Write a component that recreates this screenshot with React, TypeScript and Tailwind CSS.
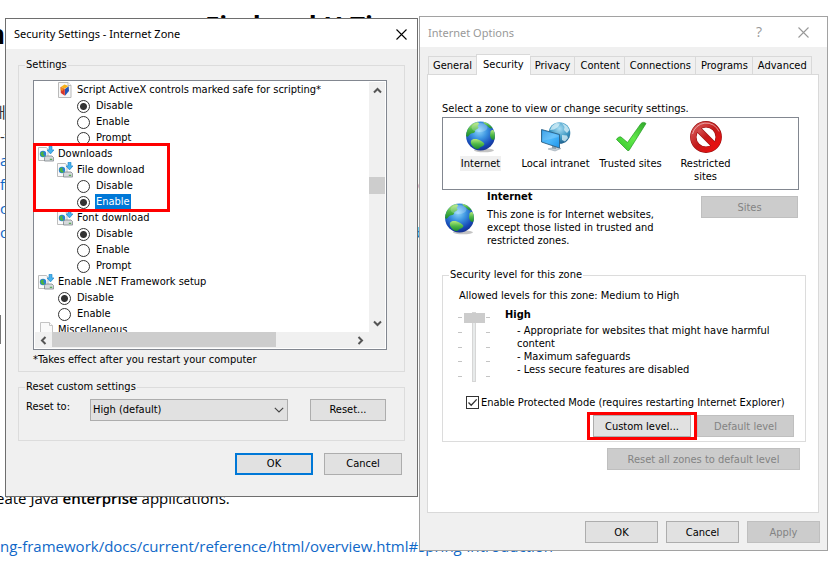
import { useState, type ReactNode } from "react";
import clsx from "clsx";

const UI = "font-['DejaVu_Sans_Condensed','DejaVu_Sans',sans-serif]";
const PAGE = "font-['Open_Sans','Noto_Sans_CJK_KR',sans-serif]";

/* ---------- icons ---------- */

function Globe({ id }: { id: string }) {
  return (
    <svg width="32" height="32" viewBox="0 0 32 32" aria-hidden="true" className="shrink-0">
      <defs>
        <radialGradient id={`${id}-sea`} cx="0.45" cy="0.32" r="0.7">
          <stop offset="0" stopColor="#8fd6fa" />
          <stop offset="0.4" stopColor="#3b93e0" />
          <stop offset="0.8" stopColor="#1546b4" />
          <stop offset="1" stopColor="#16308c" />
        </radialGradient>
        <linearGradient id={`${id}-land`} x1="0" y1="0" x2="0" y2="1">
          <stop offset="0" stopColor="#b4ea7a" />
          <stop offset="0.5" stopColor="#4fb848" />
          <stop offset="1" stopColor="#1c8a2c" />
        </linearGradient>
        <clipPath id={`${id}-clip`}>
          <circle cx="15.5" cy="15" r="14.4" />
        </clipPath>
      </defs>
      <ellipse cx="19" cy="29.3" rx="10" ry="2" fill="#8a8a8a" opacity="0.5" />
      <circle cx="15.5" cy="15" r="14.4" fill={`url(#${id}-sea)`} />
      <g clipPath={`url(#${id}-clip)`} fill={`url(#${id}-land)`}>
        <path d="M1 12C2 7 6 2.5 10 1.5 12 1 14 1.5 14 2.5 14 4 11.5 4.5 13.5 6 14 7.5 11 8.5 10.5 9 10 10 10 11.5 8.5 12 6 12 5 13 3.5 15 1.5 17 0 14 1 12Z" />
        <path d="M18 0.5C22 1 26 3.5 28 6.5 26.5 8 24.5 7.5 22.5 5 21.5 4 19 3.5 18 0.5Z" />
        <path d="M25.5 10.5C26.5 8.5 28.5 8.5 29.5 10 31 13 30.5 17 29 19 27 19 25.5 17.5 25 14.5Z" />
        <path d="M6 20C7 18 10 17.5 13 18.5 15 19.5 18.5 20.5 19.5 23 19 25 16.5 25.5 15 26.5 13.5 28.5 11 28.5 9.5 27 8 25.5 5 23 6 20Z" />
      </g>
      <ellipse cx="14.5" cy="6.5" rx="8" ry="4.5" fill="#fff" opacity="0.22" />
    </svg>
  );
}

function IntranetIcon() {
  return (
    <svg width="32" height="32" viewBox="0 0 32 32" aria-hidden="true">
      <defs>
        <radialGradient id="lan-globe" cx="0.5" cy="0.3" r="0.7">
          <stop offset="0" stopColor="#a8dcf2" />
          <stop offset="0.6" stopColor="#3f9ac4" />
          <stop offset="1" stopColor="#1f5f8c" />
        </radialGradient>
        <linearGradient id="lan-screen" x1="0" y1="0" x2="1" y2="1">
          <stop offset="0" stopColor="#1d8fe0" />
          <stop offset="0.5" stopColor="#4fb9fb" />
          <stop offset="1" stopColor="#1b93ea" />
        </linearGradient>
      </defs>
      <circle cx="19.5" cy="12" r="10.8" fill="url(#lan-globe)" />
      <path d="M12 5 16 2 20 2.5 18 6 14 8.5 10 9Z M22 2 27 5 29.5 9 27 12 24 9 24.5 6Z M22 14 27 14.5 28 17 25 20.5 22 19Z" fill="#d3edf6" opacity="0.8" />
      <path d="M8 28 15 26 21 27.5 15 30Z" fill="#c3ced6" stroke="#8c9ba6" strokeWidth="0.5" />
      <path d="M12 23 16 24.5 16 28 12 27.5Z" fill="#8fa0ab" />
      <path d="M1.5 8.5 19.5 13.5 19.5 27 1.5 21Z" fill="url(#lan-screen)" stroke="#2d5f83" strokeWidth="0.9" />
      <path d="M2.5 9.8 18.6 14.2 18.6 16 2.5 20Z" fill="#fff" opacity="0.16" />
    </svg>
  );
}

function TrustedIcon() {
  return (
    <svg width="32" height="32" viewBox="0 0 32 32" aria-hidden="true">
      <defs>
        <linearGradient id="tick" x1="1" y1="0" x2="0" y2="1">
          <stop offset="0" stopColor="#2fa62b" />
          <stop offset="0.5" stopColor="#62ea4a" />
          <stop offset="1" stopColor="#2fc128" />
        </linearGradient>
      </defs>
      <path d="M1.5 18.5C2.5 16.5 4.5 15.5 6 16L12.5 21.5 26 2.5C27.5 1 29.5 1 31 2.5L14 29.5 12.5 29.5Z" fill="url(#tick)" stroke="#249a22" strokeWidth="0.7" />
    </svg>
  );
}

function RestrictedIcon() {
  return (
    <svg width="32" height="32" viewBox="0 0 32 32" aria-hidden="true">
      <defs>
        <linearGradient id="ban" x1="0" y1="0" x2="1" y2="1">
          <stop offset="0" stopColor="#d85a5a" />
          <stop offset="0.5" stopColor="#c31a1a" />
          <stop offset="1" stopColor="#f20d0d" />
        </linearGradient>
      </defs>
      <path d="M7.5 7.5 24.5 24.5" stroke="#9a1010" strokeWidth="6.4" />
      <circle cx="16" cy="16" r="12.7" fill="none" stroke="#9a1010" strokeWidth="6.4" />
      <path d="M7.5 7.5 24.5 24.5" stroke="url(#ban)" strokeWidth="5.2" />
      <circle cx="16" cy="16" r="12.7" fill="none" stroke="url(#ban)" strokeWidth="5.2" />
      <path d="M2.5 13a14 14 0 0 1 26.5-2.5" fill="none" stroke="#fff" strokeWidth="1" opacity="0.5" />
    </svg>
  );
}

function DownloadIcon() {
  return (
    <svg width="16" height="16" viewBox="0 0 16 16" aria-hidden="true">
      <path d="M0.5 1.5h8l1.5 2v11h-9.5z" fill="#fafafa" stroke="#bdbdbd" />
      <circle cx="5" cy="8" r="3.2" fill="#2a7fd4" />
      <path d="M2.2 7.6 4 5.4 6 6 5 8 6.8 9.4 5.2 11 3.6 10Z" fill="#4db43e" />
      <path d="M11 0.3h3v3.6h2l-3.5 4-3.5-4h2z" fill="#47b3ee" stroke="#1b7fc4" strokeWidth="0.6" />
      <path d="M6.5 11.6 8 10h6l1.6 1.6v3.4h-9.1z" fill="#d6d9dc" stroke="#7d858c" strokeWidth="0.8" />
      <path d="M11.8 13.3h2.4" stroke="#46a844" strokeWidth="1.1" />
    </svg>
  );
}

function ActiveXIcon() {
  return (
    <svg width="16" height="16" viewBox="0 0 16 16" aria-hidden="true">
      <path d="M1.5 0.5h9.5l3 3v12h-12.5z" fill="#f7f7f7" stroke="#bababa" />
      <path d="M11 0.5v3h3" fill="#fff" stroke="#bababa" />
      <path d="M7.5 2.5 11.5 4 7.8 6.8 3.8 5Z" fill="#f6b21a" />
      <path d="M3.6 5 7.8 7 7.8 13.8 3.8 11Z" fill="#d8372b" />
      <path d="M11.7 4.2 12 9 8 13.8 8 7Z" fill="#2455b8" />
      <path d="M3.6 5 7 6.8 5.5 9 3.7 8Z" fill="#f08c1e" />
    </svg>
  );
}

function PageIcon() {
  return (
    <svg width="16" height="16" viewBox="0 0 16 16" aria-hidden="true">
      <path d="M2.5 0.5h9l3 3v12h-12z" fill="#fafafa" stroke="#c4c4c4" />
      <path d="M11.5 0.5v3h3" fill="#fff" stroke="#c4c4c4" />
    </svg>
  );
}

function CloseIcon() {
  return (
    <svg width="11" height="11" viewBox="0 0 11 11" aria-hidden="true">
      <path d="M0.5 0.5 10.5 10.5M10.5 0.5 0.5 10.5" stroke="currentColor" strokeWidth="1.1" />
    </svg>
  );
}

function Chevron({ turn }: { turn: string }) {
  return (
    <svg width="9" height="9" viewBox="0 0 9 9" aria-hidden="true" className={turn}>
      <path d="M1 6.5 4.5 3 8 6.5" fill="none" stroke="#555" strokeWidth="2" />
    </svg>
  );
}

/* ---------- shared controls ---------- */

function Button({ children, className, disabled, primary }: { children: ReactNode; className: string; disabled?: boolean; primary?: boolean }) {
  return (
    <button
      type="button"
      disabled={disabled}
      className={clsx(
        "h-[22px] shrink-0 text-center whitespace-nowrap",
        disabled ? "border border-[#bfbfbf] bg-[#cccccc] text-[#838383]" : "bg-[#e1e1e1] text-black",
        !disabled && (primary ? "border-2 border-[#0078d7]" : "border border-[#adadad]"),
        className,
      )}
    >
      {children}
    </button>
  );
}

const INDENT = ["pl-[3px]", "pl-[22px]", "pl-[41px]"];

function Group({ level, icon, children }: { level: number; icon: ReactNode; children: ReactNode }) {
  return (
    <li className={clsx("flex h-4 items-center gap-[3px]", INDENT[level])}>
      {icon}
      <span className="px-px whitespace-nowrap">{children}</span>
    </li>
  );
}

function Option({ level, group, value, checked, onPick, selected }: { level: number; group: string; value: string; checked: boolean; onPick: () => void; selected?: boolean }) {
  return (
    <li className={INDENT[level]}>
      <label className="flex h-4 items-center gap-[3px]">
        <span className="flex w-4 justify-start pl-px">
          <input
            type="radio"
            name={group}
            checked={checked}
            onChange={onPick}
            className="size-[13px] appearance-none rounded-full border border-[#333] bg-white bg-[radial-gradient(circle,#333_3px,transparent_4px)] not-checked:bg-none"
          />
        </span>
        <span className={clsx("h-4 px-px leading-4", selected && "bg-[#0078d7] text-white")}>{value}</span>
      </label>
    </li>
  );
}

function Options({ level, group, values, initial, selected }: { level: number; group: string; values: string[]; initial: string; selected?: string }) {
  const [value, setValue] = useState(initial);
  return values.map((v) => (
    <Option key={v} level={level} group={group} value={v} checked={v === value} onPick={() => setValue(v)} selected={v === selected} />
  ));
}

/* ---------- Security Settings dialog ---------- */

function SettingsList() {
  return (
    <div className="relative mt-2">
      <div className="border border-[#828790] bg-white p-px">
        <div className="flex h-[250px]">
          <ul className="flex-1 overflow-hidden">
            <Group level={1} icon={<ActiveXIcon />}>Script ActiveX controls marked safe for scripting*</Group>
            <Options level={2} group="activex" values={["Disable", "Enable", "Prompt"]} initial="Disable" />
            <Group level={0} icon={<DownloadIcon />}>Downloads</Group>
            <Group level={1} icon={<DownloadIcon />}>File download</Group>
            <Options level={2} group="file" values={["Disable", "Enable"]} initial="Enable" selected="Enable" />
            <Group level={1} icon={<DownloadIcon />}>Font download</Group>
            <Options level={2} group="font" values={["Disable", "Enable", "Prompt"]} initial="Disable" />
            <Group level={0} icon={<DownloadIcon />}>Enable .NET Framework setup</Group>
            <Options level={1} group="net" values={["Disable", "Enable"]} initial="Disable" />
            <Group level={0} icon={<PageIcon />}>Miscellaneous</Group>
          </ul>
          <div className="flex w-4 flex-col items-center bg-[#f0f0f0]">
            <button type="button" aria-label="Scroll up" className="flex h-[17px] items-center justify-center"><Chevron turn="" /></button>
            <div className="mt-[78px] h-[17px] w-full bg-[#cdcdcd]" />
            <button type="button" aria-label="Scroll down" className="mt-auto flex h-[17px] items-center justify-center"><Chevron turn="rotate-180" /></button>
          </div>
        </div>
        <div className="flex h-4 bg-[#f0f0f0] pr-4">
          <button type="button" aria-label="Scroll left" className="flex w-[17px] items-center justify-center"><Chevron turn="-rotate-90" /></button>
          <div className="h-[15px] w-56 bg-[#cdcdcd]" />
          <button type="button" aria-label="Scroll right" className="ml-auto flex w-[17px] items-center justify-center"><Chevron turn="rotate-90" /></button>
        </div>
      </div>
      <div className="pointer-events-none absolute top-[63px] left-0 h-[69px] w-[137px] border-3 border-[#fe0000]" />
    </div>
  );
}

function SecuritySettings() {
  return (
    <section aria-label="Security Settings" className={clsx("absolute top-[18px] left-[5px] w-[413px] border border-[#6e6e6e] bg-[#f0f0f0] text-[11px] leading-4 text-black", UI)}>
      <header className="flex h-[30px] items-center justify-between bg-white pr-[10px] pl-2">
        <h2 className="font-['Noto_Sans',sans-serif] text-[11px]">Security Settings - Internet Zone</h2>
        <button type="button" aria-label="Close"><CloseIcon /></button>
      </header>
      <div className="px-3 pt-[9px] pb-[21px]">
        <fieldset className="border border-[#dcdcdc] pr-[17px] pb-[3px] pl-[14px]">
          <legend className="-ml-2 px-px leading-[14px]">Settings</legend>
          <SettingsList />
          <p className="mt-0.5">*Takes effect after you restart your computer</p>
        </fieldset>
        <fieldset className="mt-2 border border-[#dcdcdc] pr-[18px] pb-[19px] pl-[7px]">
          <legend className="-ml-px px-px leading-[14px]">Reset custom settings</legend>
          <div className="mt-[5px] flex">
            <label htmlFor="reset-to" className="w-16">Reset to:</label>
            <div className="relative h-[22px] flex-1">
              <select id="reset-to" defaultValue="High (default)" className="h-[22px] w-full appearance-none border border-[#adadad] bg-[#e1e1e1] px-0.5">
                <option>High (default)</option>
                <option>Medium-high</option>
                <option>Medium</option>
              </select>
              <svg width="10" height="6" viewBox="0 0 10 6" aria-hidden="true" className="pointer-events-none absolute top-2 right-1">
                <path d="M0.8 0.8 5 5 9.2 0.8" fill="none" stroke="#444" strokeWidth="1.1" />
              </svg>
            </div>
            <Button className="ml-[22px] w-[76px]">Reset...</Button>
          </div>
        </fieldset>
        <div className="mt-3 flex justify-end gap-[11px] pr-[3px]">
          <Button primary className="w-[78px]">OK</Button>
          <Button className="w-[78px]">Cancel</Button>
        </div>
      </div>
    </section>
  );
}

/* ---------- Internet Options dialog ---------- */

const TABS = ["General", "Security", "Privacy", "Content", "Connections", "Programs", "Advanced"];

const ZONES: { name: string; icon: ReactNode }[] = [
  { name: "Internet", icon: <Globe id="zone" /> },
  { name: "Local intranet", icon: <IntranetIcon /> },
  { name: "Trusted sites", icon: <TrustedIcon /> },
  { name: "Restricted sites", icon: <RestrictedIcon /> },
];

function Ticks() {
  return (
    <div className="flex h-[60px] flex-col justify-between">
      {[0, 1, 2, 3, 4].map((n) => <div key={n} className="h-px w-1 bg-[#c4c4c4]" />)}
    </div>
  );
}

function InternetOptions() {
  return (
    <section aria-label="Internet Options" className={clsx("absolute top-4 left-[419px] w-[409px] border border-[#a2a2a2] bg-[#f0f0f0] text-[11px] leading-[13px] text-black", UI)}>
      <header className="flex h-[30px] items-center bg-white pr-[18px] pl-2 text-[#999]">
        <h2 className="flex-1 font-['Noto_Sans',sans-serif] text-[11px]">Internet Options</h2>
        <button type="button" aria-label="Help" className="mr-9 font-['Open_Sans',sans-serif] text-sm">?</button>
        <button type="button" aria-label="Close"><CloseIcon /></button>
      </header>
      <div className="p-[7px]">
        <div role="tablist" className="flex h-5 items-end pl-px">
          {TABS.map((tab, i) => (
            <button
              key={tab}
              type="button"
              role="tab"
              aria-selected={i === 1}
              className={clsx(
                "border-t border-l border-[#d9d9d9]",
                i === 1 ? "z-10 -mb-px h-[21px] bg-white px-[6px] pb-0.5" : "h-[18px] px-1",
                i > 2 && "pl-[5px]",
                i === TABS.length - 1 && "border-r",
              )}
            >
              {tab}
            </button>
          ))}
        </div>
        <div role="tabpanel" className="mr-px border border-[#d9d9d9] bg-white pt-[27px] pr-3 pb-[42px] pl-[14px]">
          <p className="leading-[14px]">Select a zone to view or change security settings.</p>
          <ul className="mt-px mr-[7px] flex h-[73px] border border-[#828790] pt-[3px]">
            {ZONES.map((zone, i) => (
              <li key={zone.name} className="w-[75px]">
                <button type="button" className="flex w-full flex-col items-center gap-[3px]">
                  {zone.icon}
                  <span className={clsx("py-px", i === 0 && "bg-[#f0f0f0] px-px", i === 1 && "whitespace-nowrap")}>{zone.name}</span>
                </button>
              </li>
            ))}
          </ul>
          <div className="flex items-start">
            <div className="mt-[13px] ml-0.5 pr-[11px]"><Globe id="info" /></div>
            <div>
              <h3 className="leading-[14px] font-bold">Internet</h3>
              <p className="mt-1 w-[180px]">This zone is for Internet websites, except those listed in trusted and restricted zones.</p>
            </div>
            <Button disabled className="mt-1.5 mr-2 ml-auto w-[97px]">Sites</Button>
          </div>
          <fieldset className="mt-[21px] border border-[#dcdcdc] pb-1">
            <legend className="ml-[6px] px-px leading-[14px]">Security level for this zone</legend>
            <p className="pt-[7px] pl-4 leading-[14px]">Allowed levels for this zone: Medium to High</p>
            <div className="mt-[5px] flex pl-[15px]">
              <div className="flex h-[74px] w-8 items-start justify-between pt-1">
                <div className="pt-[5px]"><Ticks /></div>
                <input
                  type="range"
                  min="0"
                  max="4"
                  defaultValue="0"
                  aria-label="Security level"
                  className="h-[70px] w-[21px] appearance-none bg-transparent [writing-mode:vertical-lr] [&::-webkit-slider-runnable-track]:w-1 [&::-webkit-slider-runnable-track]:border [&::-webkit-slider-runnable-track]:border-[#d6d6d6] [&::-webkit-slider-runnable-track]:bg-[#e7eaea] [&::-webkit-slider-thumb]:-ml-[9px] [&::-webkit-slider-thumb]:h-[10px] [&::-webkit-slider-thumb]:w-[21px] [&::-webkit-slider-thumb]:appearance-none [&::-webkit-slider-thumb]:bg-[#cccccc]"
                />
                <div className="pt-[5px]"><Ticks /></div>
              </div>
              <div className="ml-[15px]">
                <h3 className="leading-[14px] font-bold">High</h3>
                <ul className="mt-0.5 w-[274px] pl-3">
                  <li>- Appropriate for websites that might have harmful content</li>
                  <li>- Maximum safeguards</li>
                  <li>- Less secure features are disabled</li>
                </ul>
              </div>
            </div>
            <label className="mt-[13px] flex h-[14px] items-center gap-0.5 pl-[23px] whitespace-nowrap">
              <span className="relative flex">
                <input type="checkbox" defaultChecked className="peer size-[13px] appearance-none border border-[#333] bg-white" />
                <svg width="13" height="13" viewBox="0 0 13 13" aria-hidden="true" className="pointer-events-none absolute inset-0 hidden peer-checked:block">
                  <path d="M2.5 6.5 5.2 9.3 10.7 3.4" fill="none" stroke="#333" strokeWidth="1.3" />
                </svg>
              </span>
              Enable Protected Mode (requires restarting Internet Explorer)
            </label>
            <div className="mt-1.5 flex justify-end gap-[6px] pr-[11px]">
              <div className="relative">
                <Button className="w-[98px]">Custom level...</Button>
                <div className="pointer-events-none absolute -inset-x-1.5 -inset-y-[3px] border-3 border-[#fe0000]" />
              </div>
              <Button disabled className="w-[97px]">Default level</Button>
            </div>
          </fieldset>
          <div className="mt-1.5 flex justify-end pr-1.5">
            <Button disabled className="w-[193px]">Reset all zones to default level</Button>
          </div>
        </div>
        <div className="mt-2 flex justify-end gap-2">
          <Button className="w-[73px]">OK</Button>
          <Button className="w-[73px]">Cancel</Button>
          <Button disabled className="w-[73px]">Apply</Button>
        </div>
      </div>
    </section>
  );
}

/* ---------- page behind the dialogs ---------- */

const LINES: { left: string; right?: string; link?: boolean }[] = [
  { left: "대" },
  { left: "-t" },
  { left: "a", link: true },
  { left: "f", right: "c", link: true },
  { left: "c", link: true },
  { left: "oc", right: "b", link: true },
];

function Article() {
  return (
    <article className={clsx("text-[15px] leading-6 text-black", PAGE)}>
      <h1 className="-ml-3 flex h-[100px] text-[26px] leading-9 font-bold">
        <span className="w-[217px] pt-4">n</span>
        <span className="pt-2">Find and U Ti</span>
      </h1>
      {LINES.map((line, i) => (
        <p key={line.left} className={clsx("flex h-6 justify-between", i === 0 ? "-ml-2 w-[434px]" : "w-[425px]")}>
          {line.link ? <a href="#top" className="text-[#0f68c8]">{line.left}</a> : <span className="text-[#333]">{line.left}</span>}
          {line.right && <a href="#top" className="text-[#0f68c8]">{line.right}</a>}
        </p>
      ))}
      <div className="mt-[71px] h-[29px] w-px bg-[#777]" />
      <p className="-ml-1 mt-[142px]">eate Java <b className="font-semibold">enterprise</b> applications.</p>
      <p className="mt-6">
        <a href="#overview" className="text-[#0f68c8]">ng-framework/docs/current/reference/html/overview.html#spring-introduction</a>
      </p>
    </article>
  );
}

export default function App() {
  return (
    <main className="relative min-h-screen overflow-hidden bg-white">
      <Article />
      <SecuritySettings />
      <InternetOptions />
    </main>
  );
}
